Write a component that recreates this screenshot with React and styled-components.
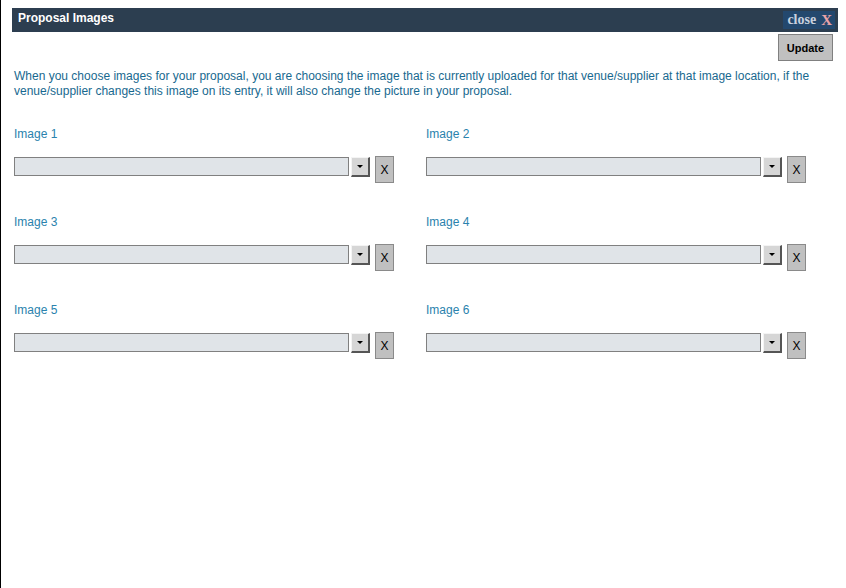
import React from "react";
import styled, { createGlobalStyle } from "styled-components";

const GlobalStyle = createGlobalStyle`
  body {
    margin: 0;
    background: #fff;
    font-family: "Liberation Sans", Arial, sans-serif;
  }
`;

const Frame = styled.div`
  border-left: 1px solid #000;
  min-height: 588px;
  box-sizing: border-box;
  padding: 8px 8px 0 11px;
`;

const TitleBar = styled.div`
  display: flex;
  align-items: center;
  justify-content: space-between;
  height: 24px;
  background: #2c3e50;
  padding: 0 3px 0 6px;
`;

const Title = styled.h1`
  margin: 0;
  color: #fff;
  font-size: 12px;
  font-weight: bold;
  margin-top: -4px;
`;

const CloseButton = styled.button`
  display: flex;
  align-items: center;
  gap: 5px;
  height: 18px;
  padding: 0 3px 0 4px;
  border: none;
  background: #23486e;
  color: #c9d1de;
  font-family: "Liberation Serif", "Times New Roman", serif;
  font-weight: bold;
  font-size: 14px;
  cursor: pointer;

  span {
    color: #e9a3a8;
    font-size: 15px;
  }
`;

const Toolbar = styled.div`
  display: flex;
  justify-content: flex-end;
  padding: 2px 5px 0 0;
`;

const UpdateButton = styled.button`
  width: 55px;
  height: 27px;
  background: #c0c0c0;
  border: 1px solid #808080;
  font-family: "Liberation Sans", Arial, sans-serif;
  font-size: 11px;
  font-weight: bold;
  color: #000;
  padding: 0;
`;

const Intro = styled.p`
  margin: 8px 0 0 2px;
  padding-right: 4px;
  color: #18698f;
  font-size: 12px;
  line-height: 15px;
`;

const Grid = styled.div`
  display: grid;
  grid-template-columns: 412px 412px;
  row-gap: 32px;
  margin: 28px 0 0 2px;
`;

const Field = styled.div`
  display: flex;
  flex-direction: column;
`;

const Label = styled.label`
  display: block;
  color: #2a82ad;
  font-size: 12px;
  line-height: 14px;
  height: 30px;
`;

const Row = styled.div`
  display: flex;
  align-items: flex-start;
`;

const SelectBox = styled.div`
  width: 335px;
  height: 19px;
  box-sizing: border-box;
  background: #e0e4e8;
  border: 1px solid #808080;
`;

const Arrow = styled.div`
  width: 19px;
  height: 20px;
  box-sizing: border-box;
  margin-left: 2px;
  background: #d6d6d6;
  border-top: 1px solid #f4f4f4;
  border-left: 1px solid #f4f4f4;
  border-right: 2px solid #555;
  border-bottom: 2px solid #555;
  display: flex;
  align-items: center;
  justify-content: center;

  &::after {
    content: "";
    border-left: 3px solid transparent;
    border-right: 3px solid transparent;
    border-top: 3px solid #000;
  }
`;

const ClearButton = styled.button`
  width: 19px;
  height: 27px;
  margin: -1px 0 0 5px;
  padding: 0;
  background: #c0c0c0;
  border: 1px solid #8a8a8a;
  font-family: "Liberation Sans", Arial, sans-serif;
  font-size: 12px;
  color: #000;
`;

const images = [1, 2, 3, 4, 5, 6];

export default function App() {
  return (
    <Frame>
      <GlobalStyle />
      <TitleBar>
        <Title>Proposal Images</Title>
        <CloseButton>
          close<span>X</span>
        </CloseButton>
      </TitleBar>
      <Toolbar>
        <UpdateButton>Update</UpdateButton>
      </Toolbar>
      <Intro>
        When you choose images for your proposal, you are choosing the image that is currently
        uploaded for that venue/supplier at that image location, if the venue/supplier changes this
        image on its entry, it will also change the picture in your proposal.
      </Intro>
      <Grid>
        {images.map((n) => (
          <Field key={n}>
            <Label>Image {n}</Label>
            <Row>
              <SelectBox />
              <Arrow />
              <ClearButton>X</ClearButton>
            </Row>
          </Field>
        ))}
      </Grid>
    </Frame>
  );
}
